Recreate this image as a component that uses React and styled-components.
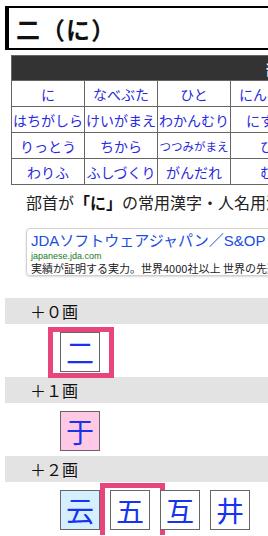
import React from 'react';
import styled, {createGlobalStyle} from 'styled-components';

const GlobalStyle = createGlobalStyle`
  html, body {
    margin: 0;
    padding: 0;
    overflow: hidden;
    background: #fff;
  }
  body {
    font-family: "Noto Sans CJK JP", "Noto Sans", sans-serif;
    color: #222;
  }
`;

const radicals = [
    ['に', 'なべぶた', 'ひと', 'にんべん', 'ひとあし', 'いる', 'はち', 'はちがしら'],
    ['はちがしら', 'けいがまえ', 'わかんむり', 'にすい', 'つくえ', 'うけばこ', 'かたな', 'りっとう'],
    ['りっとう', 'ちから', 'つつみがまえ', 'ひ', 'はこがまえ', 'かくしがまえ', 'じゅう', 'ぼく'],
    ['わりふ', 'ふしづくり', 'がんだれ', 'む', 'また', 'くち', 'くにがまえ', 'つち'],
];

const groups = [
    {label: '＋０画', kanji: [{ch: '二', mark: {l: -13, r: -15, t: -6, b: -7}}]},
    {label: '＋１画', kanji: [{ch: '于', bg: '#ffc8e4'}]},
    {label: '＋２画', kanji: [
        {ch: '云', bg: '#d6efff'},
        {ch: '五', mark: {l: -11, r: -16, t: -8, b: -30}},
        {ch: '互'},
        {ch: '井'},
    ]},
];

const Page = styled.div`
  padding: 6px 0 0 5px;
  width: 700px;
`;

const Title = styled.h1`
  margin: 0;
  height: 40px;
  display: flex;
  align-items: center;
  padding-left: 7px;
  border: 2px solid #000;
  border-left-width: 4px;
  font-size: 24px;
  font-weight: bold;
  color: #111;
  letter-spacing: 1px;
`;

const Table = styled.table`
  margin: 5px 0 0 6px;
  border-collapse: collapse;
  table-layout: fixed;
  width: 585px;
`;

const HeadCell = styled.th`
  height: 24px;
  padding: 0;
  background: #333;
  color: #fff;
  border: 1px solid #666;
  font-size: 15px;
  font-weight: bold;
  text-align: center;
`;

const Cell = styled.td`
  width: 72px;
  height: 25px;
  padding: 0;
  line-height: 20px;
  border: 1px solid #666;
  text-align: center;
  white-space: nowrap;
  overflow: hidden;
  font-size: ${p => p.$small ? '11.5px' : '14px'};
  color: #2a2ae0;
`;

const Lead = styled.p`
  margin: 5px 0 0 21px;
  font-size: 16px;
  line-height: 24px;
  white-space: nowrap;
  color: #222;

  b {
    font-weight: bold;
    color: #111;
  }
`;

const Ad = styled.div`
  margin: 14px 0 0 21px;
  width: 340px;
  height: 43px;
  padding: 3px 0 0 4px;
  border: 1px solid #d0d0d0;
  border-radius: 4px;
  box-shadow: 0 1px 2px rgba(0, 0, 0, 0.15);
  white-space: nowrap;
`;

const AdTitle = styled.div`
  font-size: 15px;
  line-height: 17px;
  color: #1a4de0;
  font-family: "Liberation Sans", "Noto Sans CJK JP", sans-serif;
`;

const AdUrl = styled.div`
  margin-top: 2px;
  font-size: 9px;
  line-height: 10px;
  color: #1d7a1d;
  font-family: "Liberation Sans", sans-serif;
`;

const AdText = styled.div`
  font-size: 11px;
  line-height: 14px;
  color: #222;
`;

const Groups = styled.div`
  margin-top: 22px;
`;

const Band = styled.div`
  height: 26px;
  background: #e3e3e3;
  padding-left: 25px;
  display: flex;
  align-items: center;
  font-size: 16px;
  color: #111;
`;

const KanjiRow = styled.div`
  display: flex;
  gap: 10px;
  padding: 8px 0 5px 55px;
`;

const KanjiBox = styled.a`
  position: relative;
  box-sizing: border-box;
  width: 40px;
  height: 40px;
  border: 1px solid #666;
  background: ${p => p.$bg || '#fff'};
  display: flex;
  align-items: center;
  justify-content: center;
  font-size: 28px;
  color: #1533f0;
  text-decoration: none;
`;

const Mark = styled.span`
  position: absolute;
  border: 5px solid #e8457c;
  pointer-events: none;
`;

export default function App() {
    return (
        <Page>
            <GlobalStyle/>
            <Title>二（に）</Title>
            <Table>
                <thead>
                    <tr><HeadCell colSpan={8}>部首の一覧</HeadCell></tr>
                </thead>
                <tbody>
                    {radicals.map((row, i) =>
                        <tr key={i}>
                            {row.map((name, j) =>
                                <Cell key={j} $small={name.length > 5}>{name}</Cell>
                            )}
                        </tr>
                    )}
                </tbody>
            </Table>
            <Lead>部首が<b>「に」</b>の常用漢字・人名用漢字の一覧</Lead>
            <Ad>
                <AdTitle>JDAソフトウェアジャパン／S&amp;OP</AdTitle>
                <AdUrl>japanese.jda.com</AdUrl>
                <AdText>実績が証明する実力。世界4000社以上 世界の先進企業が採用</AdText>
            </Ad>
            <Groups>
                {groups.map(g =>
                    <div key={g.label}>
                        <Band>{g.label}</Band>
                        <KanjiRow>
                            {g.kanji.map(k =>
                                <KanjiBox key={k.ch} $bg={k.bg}>
                                    {k.ch}
                                    {k.mark && <Mark style={{
                                        left: k.mark.l, right: k.mark.r,
                                        top: k.mark.t, bottom: k.mark.b
                                    }}/>}
                                </KanjiBox>
                            )}
                        </KanjiRow>
                    </div>
                )}
            </Groups>
        </Page>
    );
}
